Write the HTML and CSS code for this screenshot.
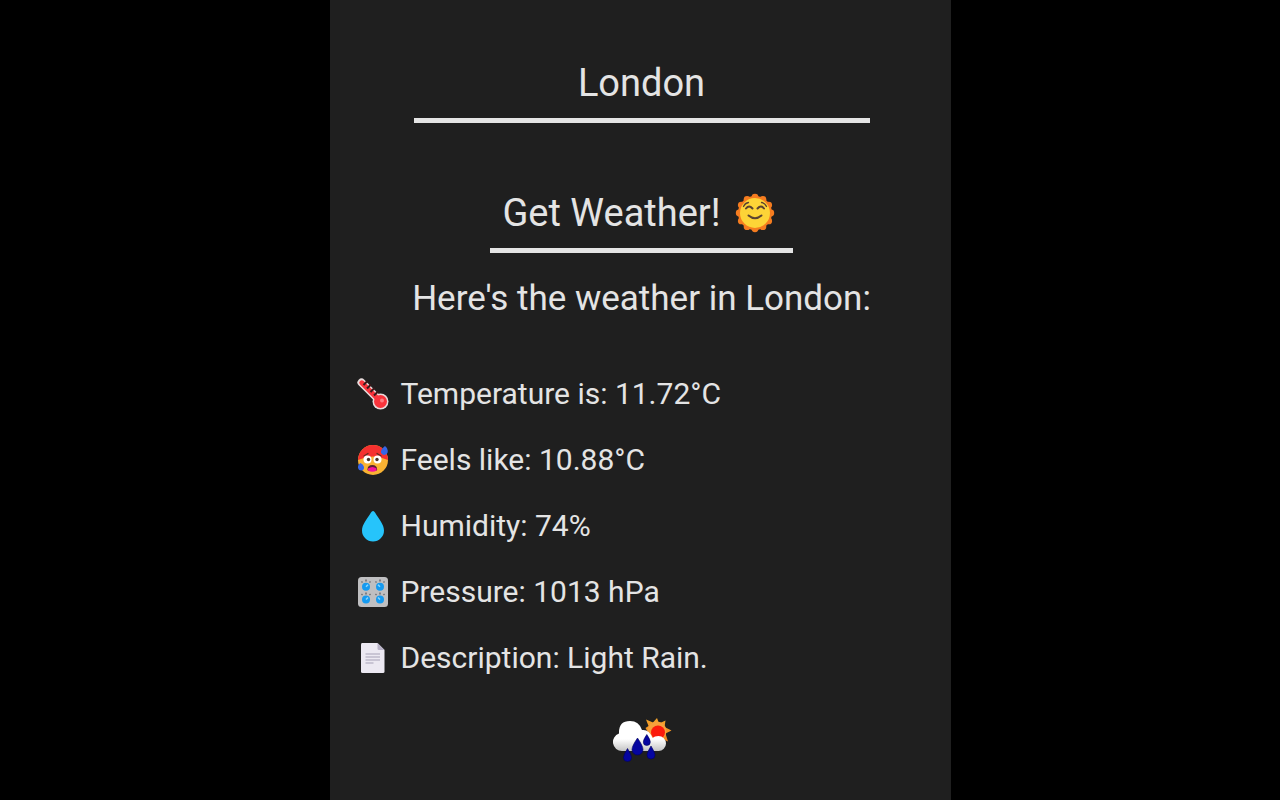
FILE: index.html
```html
<!DOCTYPE html>
<html lang="en">
<head>
    <meta charset="UTF-8">
    <meta name="viewport" content="width=device-width, initial-scale=1.0">
    <title>Weather</title>
    <link rel="stylesheet" href="styles.css">
</head>
<body>
    <main class="container">
        <form class="search">
            <input class="city" type="text" name="city" value="London" aria-label="City">
            <button class="submit" type="button">
                Get Weather!
                <svg class="sun" viewBox="0 0 40 40" aria-hidden="true">
                    <g fill="#f57c1f">
                        <circle cx="20" cy="20" r="17"/>
                        <circle cx="20" cy="4.2" r="3.4"/>
                        <circle cx="27.9" cy="6.3" r="3.4"/>
                        <circle cx="33.7" cy="12.1" r="3.4"/>
                        <circle cx="35.8" cy="20" r="3.4"/>
                        <circle cx="33.7" cy="27.9" r="3.4"/>
                        <circle cx="27.9" cy="33.7" r="3.4"/>
                        <circle cx="20" cy="35.8" r="3.4"/>
                        <circle cx="12.1" cy="33.7" r="3.4"/>
                        <circle cx="6.3" cy="27.9" r="3.4"/>
                        <circle cx="4.2" cy="20" r="3.4"/>
                        <circle cx="6.3" cy="12.1" r="3.4"/>
                        <circle cx="12.1" cy="6.3" r="3.4"/>
                    </g>
                    <circle cx="20" cy="20" r="15" fill="#fdd437"/>
                    <g fill="none" stroke="#5b4331" stroke-linecap="round">
                        <path d="M8.500 13.500q1.500-3.500 5-4M31.500 13.500q-1.500-3.500-5-4" stroke-width="1.300"/>
                        <path d="M11 15.500q3-4 6.500 0M22.500 15.500q3.500-4 6.500 0" stroke-width="2"/>
                        <path d="M13.500 22.500q6.500 5.500 13 0" stroke-width="2"/>
                    </g>
                </svg>
            </button>
        </form>

        <h1 class="title">Here's the weather in London:</h1>

        <ul class="info">
            <li>
                <svg class="icon" viewBox="0 0 32 32" aria-hidden="true">
                    <path d="M4.500 4.500L24 24" stroke="#e8dcdc" stroke-width="8" stroke-linecap="round"/>
                    <circle cx="23.500" cy="23.500" r="8" fill="#e8dcdc"/>
                    <path d="M4.800 4.800L23 23" stroke="#f9343c" stroke-width="5" stroke-linecap="round"/>
                    <circle cx="23.500" cy="23.500" r="6.500" fill="#f9343c"/>
                    <path d="M6.500 7l4-4M10 10.500l4-4M13.500 14l4-4M17 17.500l4-4" stroke="#3a1a1c" stroke-width="2"/>
                    <circle cx="25" cy="22.500" r="2" fill="#ff7b80"/>
                </svg>
                Temperature is: 11.72°C
            </li>
            <li>
                <svg class="icon" viewBox="0 0 32 32" aria-hidden="true">
                    <circle cx="16" cy="16" r="15" fill="#f9b233"/>
                    <path d="M1 16a15 15 0 0 1 30 0q-3-1-6-2-9-3-18 0-3 1-6 2z" fill="#f5302f"/>
                    <path d="M7 12l4-2.500M20 9.500l4 2.500" stroke="#5b2c20" stroke-width="1.300" stroke-linecap="round"/>
                    <circle cx="10.500" cy="15.500" r="4" fill="#fff"/>
                    <circle cx="20.500" cy="15.500" r="4" fill="#fff"/>
                    <circle cx="11.500" cy="15.500" r="1.700" fill="#4a3428"/>
                    <circle cx="20" cy="15.500" r="1.700" fill="#4a3428"/>
                    <path d="M10.500 25.500q0-4.500 4.800-4.500t4.800 4.500q0 1.200-1.500 1.200h-6.600q-1.500 0-1.500-1.200z" fill="#5b2230"/>
                    <path d="M11 24.500q4.500-3 8.500 0v2q-4 2.500-8.500 0z" fill="#f5129a"/>
                    <path d="M28 2q-4.500 3.500-4 6.500 1 2.800 4 2.300 3-.8 2.800-4Q30.500 3.500 28 2z" fill="#3565e6"/>
                    <path d="M3.500 19Q.5 21 1 24q.8 2.800 3.500 2.500t2.500-3.500Q6.500 20.500 3.500 19z" fill="#3565e6"/>
                </svg>
                Feels like: 10.88°C
            </li>
            <li>
                <svg class="icon" viewBox="0 0 32 32" aria-hidden="true">
                    <path d="M16 1q-1.200 0-2 1.500C10 9 5 14.500 5 20.500a11 11 0 0 0 22 0C27 14.500 22 9 18 2.500 17.200 1 16 1 16 1z" fill="#26c4fb"/>
                </svg>
                Humidity: 74%
            </li>
            <li>
                <svg class="icon" viewBox="0 0 32 32" aria-hidden="true">
                    <rect x="1" y="1" width="30" height="30" rx="3.500" fill="#bfbfc1"/>
                    <g fill="#159af0">
                        <circle cx="9" cy="10.800" r="4"/>
                        <circle cx="23" cy="10.800" r="4"/>
                        <circle cx="9" cy="23.500" r="4"/>
                        <circle cx="23" cy="23.500" r="4"/>
                    </g>
                    <path d="M4.500 6.500l1-1M9 3.500v2M13.500 6.500l-1-1M18.500 6.500l1-1M23 3.500v2M27.500 6.500l-1-1M4.500 19l1-1M9 16.500v2M13.500 19l-1-1M18.500 19l1-1M23 16.500v2M27.500 19l-1-1" stroke="#707176" stroke-width="1.600"/>
                    <path d="M9 10.800l2-2M23 10.800l-2-2M9 23.500l2-2M23 23.500l-2-2" stroke="#8ad8ff" stroke-width="1.500"/>
                </svg>
                Pressure: 1013 hPa
            </li>
            <li>
                <svg class="icon" viewBox="0 0 32 32" aria-hidden="true">
                    <path d="M5 1h15.500L27.500 8v21.500q0 1.500-1.500 1.500H5.500Q4 31 4 29.500V2.500Q4 1 5 1z" fill="#ece9f2"/>
                    <path d="M20.500 1L27.500 8h-5.500q-1.500 0-1.500-1.500z" fill="#b9b3c8"/>
                    <path d="M8.500 12h14.500M8.500 15h14.500M8.500 18h14.500M8.500 21h8" stroke="#bdb9ca" stroke-width="1.600"/>
                </svg>
                Description: Light Rain.
            </li>
        </ul>

        <svg class="forecast" viewBox="0 0 60 48" role="img" aria-label="Light rain">
            <defs>
                <linearGradient id="cloud" x1="0" y1="0" x2="0" y2="1">
                    <stop offset=".6" stop-color="#fff"/>
                    <stop offset="1" stop-color="#c4c4c4"/>
                </linearGradient>
                <linearGradient id="rays" x1="0" y1="0" x2="0" y2="1">
                    <stop offset="0" stop-color="#f5a52a"/>
                    <stop offset="1" stop-color="#ef8420"/>
                </linearGradient>
            </defs>
            <path d="M45 2l2 5.500 6.500-3-1 6.500 7 3.500-6 3 2.500 8-7-3-12 1-1.500-8-2-3.500 3-2-2.500-6.500 7 3z" fill="url(#rays)"/>
            <circle cx="45" cy="15" r="9.500" fill="#f7a03c"/>
            <circle cx="46" cy="16.500" r="7" fill="#fb1a0b"/>
            <path d="M10 35a9 9 0 0 1-3-17.500Q6.500 5 18 5q9 0 12 9 7-1 10.500 8 2-2 6-2a7.500 7.500 0 0 1 0 15z" fill="url(#cloud)"/>
            <g fill="#0505a0" stroke="#02025c" stroke-width=".6">
                <path d="M25.500 22q-5.500 8-5.500 11.500a5.500 5.500 0 0 0 11 0q0-3.500-5.500-11.500z"/>
                <path d="M34.800 18.500q-3.500 5-3.500 7.500a3.500 3.500 0 0 0 7 0q0-2.500-3.500-7.500z"/>
                <path d="M15.500 32.500q-4 6.500-4 9a4 4 0 0 0 8 0q0-2.500-4-9z"/>
                <path d="M39 30q-4 6.500-4 9a4 4 0 0 0 8 0q0-2.500-4-9z"/>
            </g>
        </svg>
    </main>
</body>
</html>
```
FILE: styles.css
```css
* {
    box-sizing: border-box;
}

body {
    margin: 0;
    background-color: #000;
    color: #e4e4e4;
    font-family: Roboto, sans-serif;
}

.container {
    display: flex;
    flex-direction: column;
    align-items: center;
    width: 100%;
    max-width: 621px;
    min-height: 100vh;
    margin: 0 auto;
    padding: 61px 24px 32px 27px;
    background-color: #1f1f1f;
}

.search {
    display: flex;
    flex-direction: column;
    align-items: center;
    gap: 68px;
    width: 100%;
}

.city,
.submit {
    padding: 0 12px 13px;
    border: 0;
    border-bottom: 5px solid #e4e4e4;
    border-radius: 0;
    background: none;
    color: inherit;
    font-family: inherit;
    font-size: 38px;
    line-height: 44px;
    text-align: center;
    outline: none;
}

.city {
    width: 80%;
    height: 62px;
}

.submit {
    display: flex;
    align-items: center;
    justify-content: center;
    gap: 14px;
    padding-right: 18px;
    cursor: pointer;
}

.sun {
    width: 40px;
    height: 40px;
}

.title {
    margin: 24px 0 55px;
    font-size: 35px;
    font-weight: 400;
    line-height: 44px;
    text-align: center;
}

.info {
    display: flex;
    flex-direction: column;
    gap: 30px;
    width: 100%;
    margin: 0;
    padding: 0;
    list-style: none;
    font-size: 30px;
    line-height: 36px;
}

.info li {
    display: flex;
    align-items: center;
    gap: 12px;
}

.icon {
    flex: none;
    width: 32px;
    height: 32px;
}

.forecast {
    width: 60px;
    height: 48px;
    margin-top: 40px;
}
```
